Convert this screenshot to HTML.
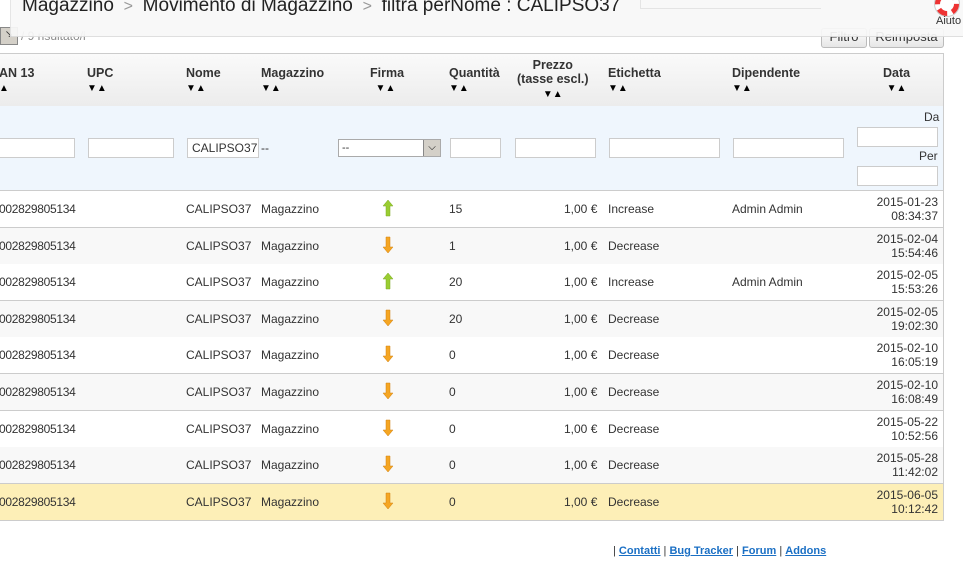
<!DOCTYPE html><html><head><meta charset="utf-8"><style>
body{margin:0;width:963px;height:564px;overflow:hidden;background:#fff;font-family:"Liberation Sans",Arial,sans-serif;font-size:12px;color:#333;position:relative}
.a{position:absolute;white-space:nowrap}
.tb{position:absolute;left:10px;top:0;width:953px;height:36px;background:#f8f8f8;border-bottom:1px solid #ddd;border-left:1px solid #e4e4e4;z-index:2;opacity:.93}
.title{left:22px;top:-5px;font-size:19px;color:#222;z-index:3}
.sep{color:#999;font-size:16px}
.btn{position:absolute;top:28px;height:18px;border:1px solid #bbb;border-radius:3px;background:linear-gradient(#fff,#e6e6e6);font-size:13px;color:#333;text-align:center;line-height:16px;overflow:hidden}
.tbl{position:absolute;left:-1px;top:53px;width:944px;height:466px;border:1px solid #ccc;border-left:0}
.hd{position:absolute;left:0;top:0;width:944px;height:52px;background:linear-gradient(#fafafa,#ececec)}
.h{font-weight:bold;color:#333;top:12px;font-size:12.5px}
.ar{font-size:10px;color:#000;line-height:18px}
.flt{position:absolute;left:0;top:52px;width:944px;height:84px;background:#eff6fd;border-bottom:1px solid #ccc}
.in{position:absolute;height:18px;border:1px solid #ccc;background:#fff}
.row{position:absolute;left:0;width:944px;height:36px;border-bottom:1px solid #ccc}
.row .a{top:11px}
</style></head><body>
<div class="tb"></div>
<div class="a" style="left:640px;top:0;width:180px;height:8px;border-bottom:1px solid #e4e4e4;border-left:1px solid #e4e4e4;z-index:3"></div>
<div class="a title">Magazzino <span class="sep">&nbsp;&gt;&nbsp;</span> Movimento di Magazzino <span class="sep">&nbsp;&gt;&nbsp;</span> filtra perNome : CALIPSO37</div>
<div class="a" style="left:935px;top:-8px;width:24px;height:24px;border-radius:50%;border:5px dashed #e33;box-sizing:border-box;background:#fff;z-index:3;box-shadow:0 0 0 1px #ccc"></div>
<div class="a" style="left:936px;top:15px;font-size:11px;color:#333;z-index:3">Aiuto</div>
<div class="a" style="left:0;top:27px;width:16px;height:16px;background:#d4d0c8;border:1px solid #888;font-size:10px;line-height:14px;text-align:center">↘</div>
<div class="a" style="left:21px;top:29px;color:#888;font-size:12px">/ 9 risultato/i</div>
<div class="btn" style="left:821px;width:44px">Filtro</div>
<div class="btn" style="left:869px;width:73px">Reimposta</div>
<div class="tbl">
<div class="hd">
<div class="a h" style="left:0">AN 13<br><span class="ar">▲</span></div>
<div class="a h" style="left:88px">UPC<br><span class="ar">▼▲</span></div>
<div class="a h" style="left:187px">Nome<br><span class="ar">▼▲</span></div>
<div class="a h" style="left:262px">Magazzino<br><span class="ar">▼▲</span></div>
<div class="a h" style="left:371px">Firma<br><span class="ar">&nbsp;&nbsp;▼▲</span></div>
<div class="a h" style="left:450px">Quantità<br><span class="ar">▼▲</span></div>
<div class="a h" style="left:518px;top:4px;text-align:center;line-height:14px">Prezzo<br>(tasse escl.)<br><span class="ar">▼▲</span></div>
<div class="a h" style="left:609px">Etichetta<br><span class="ar">▼▲</span></div>
<div class="a h" style="left:733px">Dipendente<br><span class="ar">▼▲</span></div>
<div class="a h" style="left:884px;text-align:center">Data<br><span class="ar">▼▲</span></div>
</div>
<div class="flt">
<div class="in" style="left:-2px;top:32px;width:76px"></div>
<div class="in" style="left:89px;top:32px;width:84px"></div>
<div class="in" style="left:188px;top:32px;font-size:12px;line-height:18px;padding-left:4px;box-sizing:border-box;width:72px;height:20px;overflow:hidden">CALIPSO37</div>
<div class="a" style="left:262px;top:35px">--</div>
<div class="in" style="left:339px;top:33px;width:98px;height:16px;border-color:#aaa;font-size:11px;line-height:16px;padding-left:3px">--<span style="position:absolute;right:0;top:0;width:16px;height:16px;background:#d4d0c8;border-left:1px solid #888;text-align:center;font-size:10px;color:#000">⌵</span></div>
<div class="in" style="left:451px;top:32px;width:49px"></div>
<div class="in" style="left:516px;top:32px;width:79px"></div>
<div class="in" style="left:610px;top:32px;width:109px"></div>
<div class="in" style="left:734px;top:32px;width:109px"></div>
<div class="a" style="left:925px;top:4px">Da</div>
<div class="in" style="left:858px;top:21px;width:79px"></div>
<div class="a" style="left:920px;top:43px">Per</div>
<div class="in" style="left:858px;top:60px;width:79px"></div>
</div>
<div id="rows"></div>
</div>
<div class="a" style="left:613px;top:545px;font-size:11px;color:#333">| <u style="color:#1a6fc4;font-weight:bold">Contatti</u> | <u style="color:#1a6fc4;font-weight:bold">Bug Tracker</u> | <u style="color:#1a6fc4;font-weight:bold">Forum</u> | <u style="color:#1a6fc4;font-weight:bold">Addons</u></div>
<script>
var d=[["up","15","Increase","Admin Admin","2015-01-23","08:34:37"],["dn","1","Decrease","","2015-02-04","15:54:46"],["up","20","Increase","Admin Admin","2015-02-05","15:53:26"],["dn","20","Decrease","","2015-02-05","19:02:30"],["dn","0","Decrease","","2015-02-10","16:05:19"],["dn","0","Decrease","","2015-02-10","16:08:49"],["dn","0","Decrease","","2015-05-22","10:52:56"],["dn","0","Decrease","","2015-05-28","11:42:02"],["dn","0","Decrease","","2015-06-05","10:12:42"]];
var h="";
d.forEach(function(r,i){
var bg=i==8?"#fdefb7":(i%2?"#f8f8f8":"#fff");
var ic=r[0]=="up"?'<svg width="12" height="18" viewBox="0 0 12 18"><path d="M6 1L11 7H8V17H4V7H1Z" fill="#9acd32" stroke="#7aa820" stroke-width=".5"/></svg>':'<svg width="12" height="18" viewBox="0 0 12 18"><path d="M6 17L11 11H8V1H4V11H1Z" fill="#f5a623" stroke="#d08010" stroke-width=".5"/></svg>';
h+='<div class="row" style="top:'+(137+i*36.6)+'px;background:'+bg+'">'+
'<div class="a" style="left:0;letter-spacing:-.3px">002829805134</div>'+
'<div class="a" style="left:187px">CALIPSO37</div>'+
'<div class="a" style="left:262px">Magazzino</div>'+
'<div class="a" style="left:383px;top:8px">'+ic+'</div>'+
'<div class="a" style="left:450px">'+r[1]+'</div>'+
'<div class="a" style="left:565px">1,00 €</div>'+
'<div class="a" style="left:609px">'+r[2]+'</div>'+
'<div class="a" style="left:733px">'+r[3]+'</div>'+
'<div class="a" style="right:5px;top:4px;text-align:right;line-height:14px">'+r[4]+'<br>'+r[5]+'</div></div>';});
document.getElementById("rows").innerHTML=h;
</script>
</body></html>
